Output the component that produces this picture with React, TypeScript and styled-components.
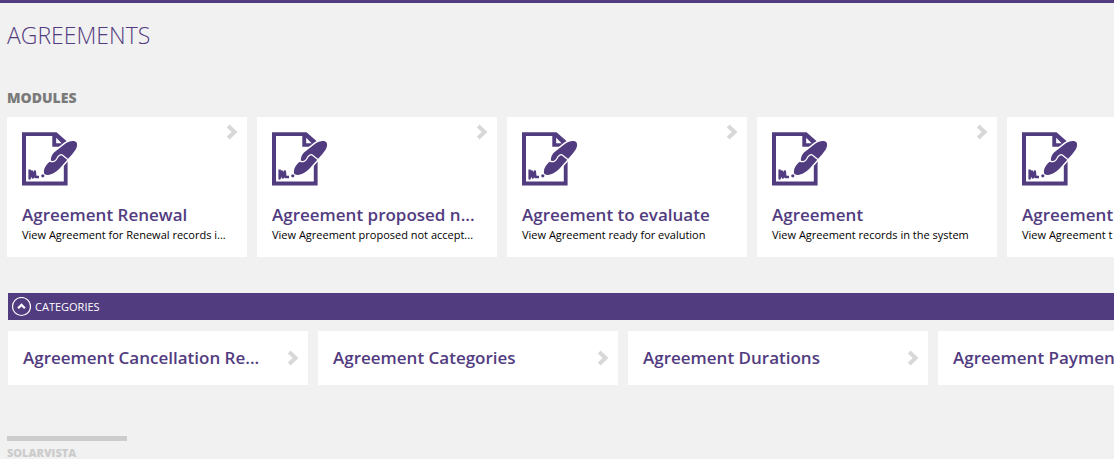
import React from "react";
import styled, { createGlobalStyle } from "styled-components";

const purple = "#523c80";
const canvas = "#f1f1f1";

const GlobalStyle = createGlobalStyle`
  * { box-sizing: border-box; }
  body {
    margin: 0;
    background: ${canvas};
    font-family: "Segoe UI", "Open Sans", "Noto Sans", sans-serif;
    overflow: hidden;
  }
  h1, h2, h3, p, ul { margin: 0; padding: 0; }
`;

const Page = styled.div`
  border-top: 3px solid ${purple};
  padding-left: 7px;
  overflow: hidden;
`;

const PageTitle = styled.h1`
  padding-top: 16px;
  font-size: 23px;
  line-height: 32px;
  font-weight: 300;
  color: ${purple};
`;

const SectionTitle = styled.h2`
  margin-top: 37px;
  font-size: 14px;
  line-height: 20px;
  font-weight: 800;
  color: #7a7a7a;
`;

const Strip = styled.ul`
  display: flex;
  gap: 10px;
  list-style: none;
  overflow: hidden;
`;

const ModuleStrip = styled(Strip)`
  margin-top: 9px;
`;

const CategoryStrip = styled(Strip)`
  margin-top: 11px;
`;

const Item = styled.li`
  flex: none;
  display: flex;
`;

const Tile = styled.a`
  display: flex;
  background: #fff;
  color: #000;
  text-decoration: none;
  white-space: nowrap;
`;

const ModuleTile = styled(Tile)`
  flex-direction: column;
  width: 240px;
  height: 140px;
  padding: 15px 9px 0 15px;
`;

const TileTop = styled.span`
  display: flex;
  justify-content: space-between;
  align-items: flex-start;
  height: 72px;
`;

const TileTitle = styled.span`
  font-size: 17px;
  line-height: 22px;
  font-weight: 600;
  color: ${purple};
`;

const TileText = styled.span`
  font-size: 11px;
  line-height: 18px;
`;

const CategoryTile = styled(Tile)`
  justify-content: space-between;
  align-items: center;
  width: 300px;
  height: 54px;
  padding: 0 9px 0 15px;
`;

const Categories = styled.section`
  margin-top: 36px;
  padding-left: 1px;
`;

const CategoryHeader = styled.button`
  display: flex;
  align-items: center;
  gap: 4px;
  width: 100%;
  height: 27px;
  padding: 0 3px;
  border: 0;
  background: ${purple};
  color: #fff;
  font-family: inherit;
  font-size: 11px;
  line-height: 16px;
  text-align: left;
`;

const Footer = styled.footer`
  margin-top: 51px;
  color: #cccccc;
  font-size: 11px;
  line-height: 16px;
  font-weight: 800;
`;

const Rule = styled.hr`
  width: 120px;
  height: 5px;
  margin: 0 0 4px;
  border: 0;
  background: #cccccc;
`;

const Arrow = () => (
  <svg width="12" height="16" viewBox="0 0 12 16" aria-hidden="true">
    <path d="M2.2 2 8.6 8 2.2 14" fill="none" stroke="#d8d8d8" strokeWidth="4" />
  </svg>
);

const TopArrow = styled.span`
  display: flex;
  margin-top: -8px;
`;

const AgreementIcon = () => (
  <svg width="56" height="54" viewBox="0 0 56 54" fill={purple} aria-hidden="true">
    <path
      fillRule="evenodd"
      d="M0 .3H34.5L45.6 10V53.5H0ZM4 4V49.6H41.8V14.8H30.3V4Z"
    />
    <path d="M34.2 5.8V11.2H39.6Z" fill="#fff" />
    <path
      d="M22.4 42C20.6 38 23.5 33 28.8 28.8 28.8 25.5 29.8 23 32 20.6L43.5 11.4C47 8.8 52.3 8 54.4 10.2 56.4 14 54 18 48.6 24L37.6 36.6C33 41.5 26.5 44.6 22.4 42Z"
      stroke="#fff"
      strokeWidth="3"
      paintOrder="stroke"
    />
    <path
      d="M27.5 28.8C31 30.6 33.6 29.2 34.8 26.8 36.2 23.6 38.8 21.6 40.6 23.2L47.4 28.8"
      fill="none"
      stroke="#fff"
      strokeWidth="1.3"
    />
    <path
      d="M7.6 37.5V46.5L9.8 39.5 10.8 45.5 12.8 39.5 13.4 45H17"
      fill="none"
      stroke={purple}
      strokeWidth="2.4"
      strokeLinejoin="round"
    />
    <circle cx="20.8" cy="43.8" r="1.6" />
  </svg>
);

const CollapseIcon = () => (
  <svg width="20" height="20" viewBox="0 0 20 20" fill="none" stroke="#fff" aria-hidden="true">
    <circle cx="10.5" cy="9.5" r="9" strokeWidth="1.2" />
    <path d="M7.1 11.3 10.5 7.9 13.9 11.3" strokeWidth="2.2" />
  </svg>
);

const modules = [
  { title: "Agreement Renewal", text: "View Agreement for Renewal records i..." },
  { title: "Agreement proposed n...", text: "View Agreement proposed not accept..." },
  { title: "Agreement to evaluate", text: "View Agreement ready for evalution" },
  { title: "Agreement", text: "View Agreement records in the system" },
  { title: "Agreement", text: "View Agreement t" },
];

const categories = [
  "Agreement Cancellation Re...",
  "Agreement Categories",
  "Agreement Durations",
  "Agreement Paymen",
];

export default function App() {
  return (
    <>
      <GlobalStyle />
      <Page>
        <PageTitle>AGREEMENTS</PageTitle>
        <SectionTitle>MODULES</SectionTitle>
        <ModuleStrip>
          {modules.map((m) => (
            <Item key={m.text}>
              <ModuleTile href="#">
                <TileTop>
                  <AgreementIcon />
                  <TopArrow>
                    <Arrow />
                  </TopArrow>
                </TileTop>
                <TileTitle>{m.title}</TileTitle>
                <TileText>{m.text}</TileText>
              </ModuleTile>
            </Item>
          ))}
        </ModuleStrip>
        <Categories>
          <CategoryHeader type="button" aria-expanded="true">
            <CollapseIcon />
            CATEGORIES
          </CategoryHeader>
          <CategoryStrip>
            {categories.map((c) => (
              <Item key={c}>
                <CategoryTile href="#">
                  <TileTitle>{c}</TileTitle>
                  <Arrow />
                </CategoryTile>
              </Item>
            ))}
          </CategoryStrip>
        </Categories>
        <Footer>
          <Rule />
          SOLARVISTA
        </Footer>
      </Page>
    </>
  );
}
